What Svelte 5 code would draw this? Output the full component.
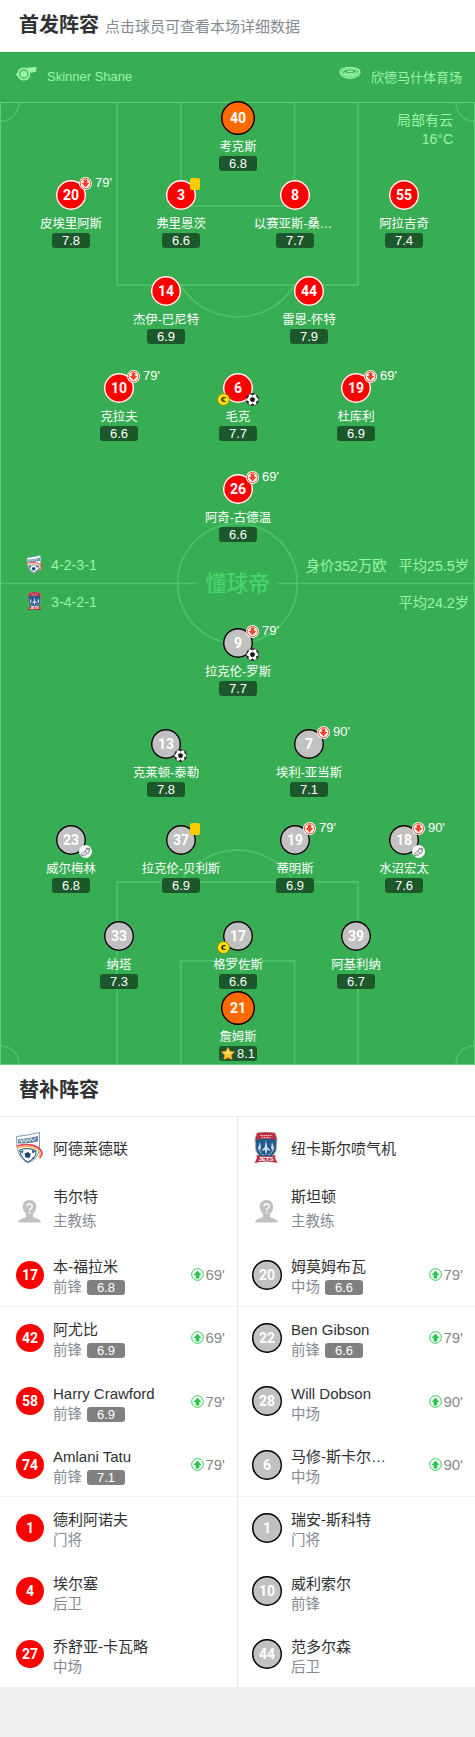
<script>
  // x / y is the middle of the shirt circle on the pitch
  const starters = [
    { no: 40, name: '考克斯', score: '6.8', x: 238, y: 118, kit: 'keeper' },
    { no: 20, name: '皮埃里阿斯', score: '7.8', x: 71, y: 195, kit: 'home', off: 79 },
    { no: 3, name: '弗里恩茨', score: '6.6', x: 181, y: 195, kit: 'home', card: true },
    { no: 8, name: '以赛亚斯-桑…', score: '7.7', x: 295, y: 195, kit: 'home', clipped: true },
    { no: 55, name: '阿拉吉奇', score: '7.4', x: 404, y: 195, kit: 'home' },
    { no: 14, name: '杰伊-巴尼特', score: '6.9', x: 166, y: 291, kit: 'home' },
    { no: 44, name: '雷恩-怀特', score: '7.9', x: 309, y: 291, kit: 'home' },
    { no: 10, name: '克拉夫', score: '6.6', x: 119, y: 388, kit: 'home', off: 79 },
    { no: 6, name: '毛克', score: '7.7', x: 238, y: 388, kit: 'home', captain: true, goal: true },
    { no: 19, name: '杜库利', score: '6.9', x: 356, y: 388, kit: 'home', off: 69 },
    { no: 26, name: '阿奇-古德温', score: '6.6', x: 238, y: 489, kit: 'home', off: 69 },
    { no: 9, name: '拉克伦-罗斯', score: '7.7', x: 238, y: 643, kit: 'away', off: 79, goal: true },
    { no: 13, name: '克莱顿-泰勒', score: '7.8', x: 166, y: 744, kit: 'away', goal: true },
    { no: 7, name: '埃利-亚当斯', score: '7.1', x: 309, y: 744, kit: 'away', off: 90 },
    { no: 23, name: '威尔梅林', score: '6.8', x: 71, y: 840, kit: 'away', assist: true },
    { no: 37, name: '拉克伦-贝利斯', score: '6.9', x: 181, y: 840, kit: 'away', card: true },
    { no: 19, name: '蒂明斯', score: '6.9', x: 295, y: 840, kit: 'away', off: 79 },
    { no: 18, name: '水沼宏太', score: '7.6', x: 404, y: 840, kit: 'away', off: 90, assist: true },
    { no: 33, name: '纳塔', score: '7.3', x: 119, y: 936, kit: 'away' },
    { no: 17, name: '格罗佐斯', score: '6.6', x: 238, y: 936, kit: 'away', captain: true },
    { no: 39, name: '阿基利纳', score: '6.7', x: 356, y: 936, kit: 'away' },
    { no: 21, name: '詹姆斯', score: '8.1', x: 238, y: 1008, kit: 'keeper', best: true }
  ];

  const teams = [
    {
      side: 'home',
      name: '阿德莱德联',
      coach: '韦尔特',
      subs: [
        { no: 17, name: '本-福拉米', role: '前锋', score: '6.8', on: 69 },
        { no: 42, name: '阿尤比', role: '前锋', score: '6.9', on: 69 },
        { no: 58, name: 'Harry Crawford', role: '前锋', score: '6.9', on: 79 },
        { no: 74, name: 'Amlani Tatu', role: '前锋', score: '7.1', on: 79 },
        { no: 1, name: '德利阿诺夫', role: '门将' },
        { no: 4, name: '埃尔塞', role: '后卫' },
        { no: 27, name: '乔舒亚-卡瓦略', role: '中场' }
      ]
    },
    {
      side: 'away',
      name: '纽卡斯尔喷气机',
      coach: '斯坦顿',
      subs: [
        { no: 20, name: '姆莫姆布瓦', role: '中场', score: '6.6', on: 79 },
        { no: 22, name: 'Ben Gibson', role: '前锋', score: '6.6', on: 79 },
        { no: 28, name: 'Will Dobson', role: '中场', on: 90 },
        { no: 6, name: '马修-斯卡尔…', role: '中场', on: 90 },
        { no: 1, name: '瑞安-斯科特', role: '门将' },
        { no: 10, name: '威利索尔', role: '前锋' },
        { no: 44, name: '范多尔森', role: '后卫' }
      ]
    }
  ];
</script>

{#snippet crest(side)}
  {#if side === 'home'}
    <svg class="crest" viewBox="0 0 28 32">
      <path d="M1.500 4.500Q12 3.500 24.500 .5L24.500 17Q23 27 13 31Q4 27 2 15Z" fill="#fff" stroke="#6f8fae" stroke-width=".9" />
      <path d="M3 7.500Q13 7 23 4L23 9.500Q12 12 3 11.500Z" fill="#5e82a3" />
      <path d="M4 10L6 7.800L7 10.500L9 7.500L11 10.300L12.500 7L14.500 9.500L16 6.500L18 9L21 5.800" fill="none" stroke="#fff" stroke-width=".9" />
      <path d="M4.500 18Q13 15 21 18.500Q22 26 13 30Q6 27 4.500 18Z" fill="#fff" stroke="#1c4b7c" stroke-width="1" />
      <path d="M9.500 21.500L13 20L15.800 22L14.500 26L10.500 25.500ZM5 19L8.500 18.500L7.500 21.500ZM17 18L20.500 19.500L17.500 21.500ZM7 25L10 28L11 29.500ZM15.500 28.500L18 25L19.500 25.500Z" fill="#174575" />
      <path d="M2 14Q15 10.500 23 15.500Q30 21 24.500 26" fill="none" stroke="#e9436a" stroke-width="1.800" />
      <path d="M2 15.700Q15 12 22.500 17Q27 21 23.500 25.500" fill="none" stroke="#ffb64b" stroke-width="1.500" />
    </svg>
  {:else}
    <svg class="crest" viewBox="0 0 28 32">
      <path d="M5 1Q14-1 23 1L25 7L24 19L20 25L8 25L4 19L3 7Z" fill="#235b91" stroke="#b9aa8b" stroke-width="1" />
      <path d="M5 1.500Q14-.5 23 1.500L24 8Q14 5 4 8Z" fill="#c52c41" />
      <path d="M8 3.500H20M9.500 5.600H18.500" stroke="#e8c5c8" stroke-width="1" stroke-dasharray="1.500 .5" />
      <path d="M14 8L15.200 15L19 19L15 18L14 24L13 18L9 19L12.800 15ZM8 10L9 16L7 19L6 16ZM20 10L22 16L21 19L19 16Z" fill="#d1dde4" />
      <path d="M7 18Q9 23 12 23M21 18Q19 23 16 23" stroke="#94afc5" fill="none" />
      <path d="M4.500 23Q14 26 23.500 23L23 26L25.500 31Q14 28 2.500 31L5 26Z" fill="#bd2e42" />
      <text x="14" y="29.200" text-anchor="middle" class="jets">JETS</text>
    </svg>
  {/if}
{/snippet}

{#snippet arrow(dir)}
  <svg class="arrow {dir}" viewBox="0 0 14 14">
    <circle cx="7" cy="7" r="7" fill="#fff" />
    <circle cx="7" cy="7" r={dir === 'up' ? 6.3 : 5.6} fill="none" stroke="currentColor" stroke-width="1" />
    <path d="M5 2.800H9V6.500H11.200L7 11.200L2.800 6.500H5Z" fill="currentColor" />
  </svg>
{/snippet}

<div class="page">
  <header>
    <h2>首发阵容</h2>
    <span>点击球员可查看本场详细数据</span>
  </header>

  <section class="pitch">
    <svg class="lines" viewBox="0 52 475 1013">
      <g fill="none" stroke="#4bc368" stroke-width="1.700">
        <path d="M117 103V285.200H358V103M180.700 103V206H294.500V103M180.700 285.500A67.300 67.300 0 0 0 294.500 285.500" />
        <path d="M117 1064V881.800H358V1064M180.700 1064V960.800H294.500V1064M180.700 881.500A67.300 67.300 0 0 1 294.500 881.500" />
        <circle cx="237.500" cy="583.500" r="59.800" />
        <path d="M1 583.500H197.500M277.500 583.500H474" />
        <path d="M19 103A18 18 0 0 1 1 121M456 103A18 18 0 0 0 474 121M1 1046A18 18 0 0 1 19 1064M474 1046A18 18 0 0 0 456 1064" />
      </g>
      <rect x=".5" y="102.500" width="474" height="962" fill="none" stroke="#5dd47a" />
    </svg>

    <div class="info">
      <div class="info-item">
        <svg width="22" height="14" viewBox="0 0 22 14">
          <circle cx="8.800" cy="7" r="5.600" fill="none" stroke="#9af5a8" stroke-width="1.900" />
          <circle cx="8.800" cy="7" r="3.500" fill="#9af5a8" />
          <path d="M11.500 .8L21.500 0L21.300 4.500L16 6L14.500 4Z" fill="#9af5a8" />
          <path d="M4 5L.3 7.500L3.500 9.500Z" fill="#9af5a8" />
        </svg>
        <span>Skinner Shane</span>
      </div>
      <div class="info-item">
        <svg width="22" height="13" viewBox="0 0 22 13">
          <path d="M0 4.500Q11 12 22 4.500L20.500 8.500Q11 15.500 1.500 8.500Z" fill="#9af5a8" />
          <path d="M.8 6.300Q11 14 21.200 6.300" fill="none" stroke="#37ae54" stroke-width=".6" />
          <ellipse cx="11" cy="4.300" rx="9.800" ry="3.800" fill="#60cf78" stroke="#9af5a8" stroke-width="1.300" />
          <ellipse cx="11" cy="4.300" rx="6.500" ry="2.300" fill="#37ae54" stroke="#9af5a8" />
          <ellipse cx="11" cy="4.300" rx="3.300" ry=".9" fill="#9af5a8" />
        </svg>
        <span>欣德马什体育场</span>
      </div>
    </div>

    <div class="weather">
      <span>局部有云</span>
      <span>16°C</span>
    </div>

    <div class="brand">懂球帝</div>

    <div class="summary">
      <div class="summary-row">
        {@render crest('home')}
        <span class="formation">4-2-3-1</span>
        <span>身价352万欧</span>
        <span>平均25.5岁</span>
      </div>
      <div class="summary-row">
        {@render crest('away')}
        <span class="formation">3-4-2-1</span>
        <span>平均24.2岁</span>
      </div>
    </div>

    {#each starters as p}
      <div class="player" style="left: {p.x}px; top: {p.y - 52}px">
        <div class="shirt {p.kit}">{p.no}</div>
        <div class="name" class:clipped={p.clipped}>{p.name}</div>
        <div class="score">
          {#if p.best}
            <svg class="star" viewBox="0 0 14 13">
              <path d="M7 .6L9 4.300L13.400 5L10.300 8L11 12.300L7 10.500L3 12.300L3.700 8L.6 5L5 4.300Z" fill="#ffc533" stroke="#f79b1e" stroke-width=".8" stroke-linejoin="round" />
              <path d="M7 2.200L8.400 5.200L12 5.700L7 7L2 5.700L5.600 5.200Z" fill="#ffe277" />
            </svg>
          {/if}
          {p.score}
        </div>
        {#if p.off}
          <div class="off">{@render arrow('down')}<span>{p.off}'</span></div>
        {/if}
        {#if p.card}
          <i class="card"></i>
        {/if}
        {#if p.captain}
          <i class="captain">c</i>
        {/if}
        {#if p.goal}
          <svg class="event" viewBox="0 0 14 14">
            <circle cx="7" cy="7" r="6.600" fill="#fff" stroke="#333" stroke-width=".6" />
            <path d="M7 4.500L9.500 6.300L8.500 9.200H5.500L4.500 6.300ZM4.800 .9L7 2.200L9.200 .9ZM.6 6L2.500 4.200L2.300 2.300ZM13.400 6L11.500 4.200L11.700 2.300ZM2.200 11.600L2.700 9.200L.8 8.500ZM11.800 11.600L11.300 9.200L13.200 8.500ZM5.200 13.200L7 11.500L8.800 13.200Z" fill="#151515" stroke="#151515" stroke-width=".7" />
          </svg>
        {/if}
        {#if p.assist}
          <svg class="event" viewBox="0 0 14 14">
            <circle cx="7" cy="7" r="7" fill="#fff" />
            <path d="M2 9.800L6.500 6.500L8.200 3.300L11.500 3.800L11 7.500L6 10.500L2.700 11.500ZM6.500 6.500L8 8.500M8.200 3.500L9 5L11.300 5" fill="#f2f2f2" stroke="#555" stroke-width=".7" />
            <path d="M3 12.300L4 11.500M6 11.800L6.800 10.800M9 10L10 9" stroke="#555" stroke-width=".9" />
          </svg>
        {/if}
      </div>
    {/each}
  </section>

  <h2 class="bench-title">替补阵容</h2>

  <section class="bench">
    {#each teams as team}
      <div class="column {team.side}">
        <div class="row">
          <div class="icon">{@render crest(team.side)}</div>
          <div class="sub-name">{team.name}</div>
        </div>
        <div class="row">
          <div class="icon">
            <svg class="avatar" viewBox="0 0 23 23">
              <path d="M11.500 0C16 0 18.300 3.200 18.300 6.800C18.300 10 16.500 12.400 15 14.200V17L20.500 19.300Q23 20.700 23 22.500H0Q0 20.700 2.500 19.300L8 17V14.200C6.500 12.400 4.700 10 4.700 6.800C4.700 3.200 7 0 11.500 0Z" fill="#c1c1c1" />
              <path d="M9 6.500Q9 4 11.500 4Q14.200 4 14.200 6.300Q14.200 7.700 12.600 8.600Q11.600 9.200 11.600 10.800M11.600 12V13.500" fill="none" stroke="#fff" stroke-width="1.400" />
            </svg>
          </div>
          <div class="coach">
            <div class="sub-name">{team.coach}</div>
            <div class="role">主教练</div>
          </div>
        </div>
        {#each team.subs as s, i}
          <div class="row" class:divided={i === 0 || i === 3}>
            <div class="icon"><div class="shirt {team.side}">{s.no}</div></div>
            <div class="detail">
              <div class="sub-name">{s.name}</div>
              <div class="role">
                <span>{s.role}</span>
                {#if s.score}
                  <span class="score">{s.score}</span>
                {/if}
              </div>
            </div>
            {#if s.on}
              <div class="on">{@render arrow('up')}<span>{s.on}'</span></div>
            {/if}
          </div>
        {/each}
      </div>
    {/each}
  </section>
</div>

<style>
  :global(body) {
    background: #eeeff1;
  }
  .page {
    width: 475px;
    height: 1737px;
    font-family: 'Liberation Sans', 'Noto Sans CJK SC', sans-serif;
    color: #2f3133;
  }
  header {
    height: 52px;
    box-sizing: border-box;
    padding: 0 19px 1px;
    display: flex;
    align-items: center;
    gap: 6px;
    background: #fff;
    border-bottom: 1px solid #eee;
  }
  h2 {
    margin: 0;
    font-size: 20px;
    line-height: 30px;
    font-weight: 700;
  }
  header span {
    font-size: 15px;
    color: #848a92;
  }
  .pitch {
    position: relative;
    height: 1013px;
    background: #37ae54;
    color: #9af5a8;
  }
  .lines {
    position: absolute;
    inset: 0;
    width: 475px;
    height: 1013px;
  }
  .info {
    position: relative;
    height: 48px;
    padding: 0 13px 2px 15px;
    display: flex;
    justify-content: space-between;
    font-size: 13px;
  }
  .info-item {
    display: flex;
    align-items: center;
    gap: 10px;
  }
  .info-item svg {
    margin-bottom: 5px;
  }
  .weather {
    position: absolute;
    top: 59px;
    right: 22px;
    display: flex;
    flex-direction: column;
    align-items: flex-end;
    font-size: 14px;
    line-height: 19px;
  }
  .brand {
    position: absolute;
    top: 517px;
    left: 0;
    width: 475px;
    text-align: center;
    font-size: 21.500px;
    line-height: 30px;
    font-weight: 500;
    color: #48d469;
  }
  .summary {
    position: absolute;
    top: 494px;
    left: 0;
    right: 0;
    padding: 0 6px 0 24px;
    font-size: 14.250px;
  }
  .summary-row {
    height: 37px;
    display: flex;
    align-items: center;
    gap: 12px;
  }
  .summary-row .crest {
    width: 21px;
    height: 19px;
    margin-right: -6px;
  }
  .formation {
    margin-right: auto;
  }
  .crest {
    display: block;
    width: 28px;
    height: 32px;
  }
  .jets {
    font: 700 6px 'Liberation Sans', sans-serif;
    fill: #fff;
  }
  .player {
    position: absolute;
    width: 0;
    height: 0;
    display: flex;
    flex-direction: column;
    align-items: center;
    color: #fff;
  }
  .shirt {
    flex: none;
    width: 30px;
    height: 30px;
    display: flex;
    align-items: center;
    justify-content: center;
    border-radius: 50%;
    box-shadow: inset 0 0 0 1.400px #fff;
    font-family: Roboto, sans-serif;
    font-size: 14px;
    font-weight: 700;
    color: #fff;
  }
  .player .shirt {
    margin-top: -15px;
  }
  .shirt.home {
    background: #f00;
  }
  .shirt.away {
    background: #c1c1c1;
    box-shadow: inset 0 0 0 1.400px #000;
  }
  .player .keeper {
    width: 34px;
    height: 34px;
    margin: -17px 0 -2px;
    background: #ff6900;
    box-shadow: inset 0 0 0 1.400px #000;
  }
  .name {
    margin-top: 5px;
    height: 18px;
    font-size: 12.400px;
    line-height: 19px;
    white-space: nowrap;
  }
  .name.clipped {
    margin-right: 4px;
  }
  .score {
    flex: none;
    width: 38px;
    height: 15px;
    display: flex;
    align-items: center;
    justify-content: center;
    border-radius: 3px;
    background: #1c582b;
    font-size: 13px;
    line-height: 15px;
    color: #fff;
  }
  .star {
    width: 14px;
    height: 13px;
    margin-right: 2px;
  }
  .arrow {
    display: block;
    flex: none;
    width: 13px;
    height: 13px;
  }
  .down {
    color: #f5442b;
  }
  .up {
    color: #24c94a;
    transform: rotate(180deg);
  }
  .off {
    position: absolute;
    left: 8px;
    top: -18px;
    display: flex;
    align-items: center;
    gap: 3px;
    font-size: 13px;
    line-height: 13px;
  }
  .off span {
    margin-top: -2px;
  }
  .card {
    position: absolute;
    left: 9px;
    top: -17px;
    width: 10px;
    height: 12px;
    border-radius: 2px;
    background: #fc0;
  }
  .captain {
    position: absolute;
    left: -21px;
    top: 5px;
    box-sizing: border-box;
    width: 13px;
    height: 13px;
    border: 1px solid #8d8a10;
    border-radius: 50%;
    background: #ffe000;
    font: 700 9px/10px 'DejaVu Sans', sans-serif;
    text-align: center;
    color: #222;
  }
  .event {
    position: absolute;
    left: 8px;
    top: 5px;
    width: 13px;
    height: 13px;
  }
  .bench-title {
    padding: 10px 19px 11px;
    background: #fff;
    border-bottom: 1px solid #eee;
  }
  .bench {
    display: grid;
    grid-template-columns: 238px 237px;
    height: 569.500px;
    background: #fff;
  }
  .column {
    box-sizing: border-box;
    display: grid;
    grid-template-rows: repeat(9, 1fr);
  }
  .column.home {
    border-right: 1px solid #e9eaeb;
  }
  .row {
    box-sizing: border-box;
    display: flex;
    align-items: center;
    padding-right: 12px;
    border-bottom: 1px solid transparent;
  }
  .row.divided {
    border-bottom-color: #f3f3f4;
  }
  .icon {
    flex: none;
    width: 38px;
    padding-left: 15px;
  }
  .away .icon {
    padding-left: 14px;
    width: 39px;
  }
  .icon .home {
    width: 28px;
    height: 28px;
    margin-left: 1px;
    box-shadow: none;
  }
  .avatar {
    display: block;
    width: 23px;
    height: 23px;
    margin-left: 3px;
  }
  .sub-name {
    font-size: 15px;
    line-height: 21px;
    white-space: nowrap;
  }
  .detail {
    padding-top: 5px;
  }
  .coach {
    display: grid;
    gap: 4px;
    padding-bottom: 5px;
  }
  .role {
    display: flex;
    align-items: center;
    gap: 5px;
    font-size: 14.500px;
    line-height: 21px;
    color: #848a92;
  }
  .role .score {
    background: #808080;
  }
  .on {
    display: flex;
    align-items: center;
    gap: 1px;
    margin-left: auto;
    font-size: 15px;
    color: #888;
  }
</style>
